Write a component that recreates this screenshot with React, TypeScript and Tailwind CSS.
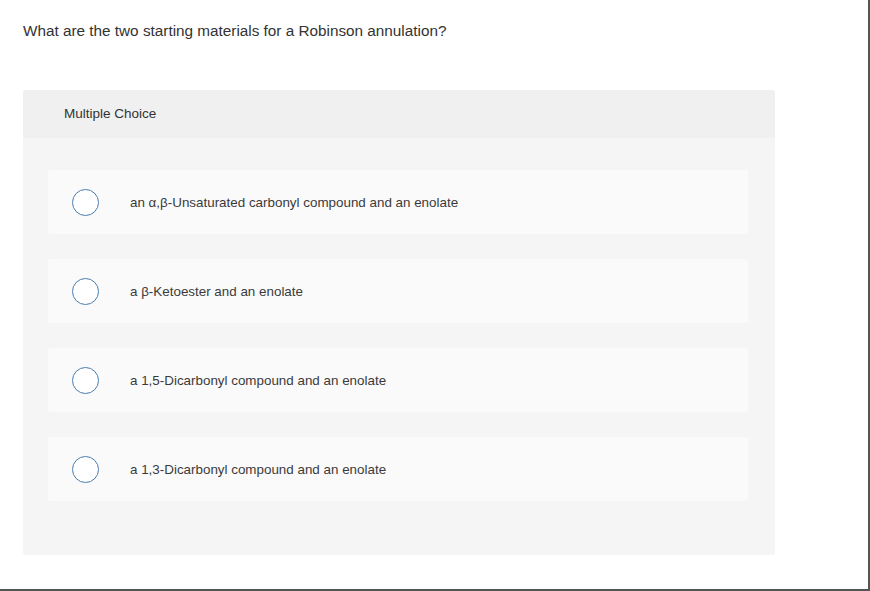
import React from "react";

const options = [
  "an α,β-Unsaturated carbonyl compound and an enolate",
  "a β-Ketoester and an enolate",
  "a 1,5-Dicarbonyl compound and an enolate",
  "a 1,3-Dicarbonyl compound and an enolate",
];

export default function App() {
  return (
    <div
      className="w-[870px] h-[591px] bg-white border-r-2 border-b-2 border-[#555] overflow-hidden"
      style={{ fontFamily: "'Liberation Sans', Arial, sans-serif" }}
    >
      <div className="pt-[21px] pl-[23px] text-[15.3px] leading-[20px] text-[#333]">
        What are the two starting materials for a Robinson annulation?
      </div>
      <div className="mt-[49px] ml-[23px] w-[752px] rounded-[3px] bg-[#f5f5f5] overflow-hidden">
        <div className="h-[48px] bg-[#f0f0f0] pl-[41px] pt-[1px] flex items-center text-[13.5px] text-[#333]">
          Multiple Choice
        </div>
        <div className="pt-[32px] pb-[54px] pl-[25px] flex flex-col gap-[25px]">
          {options.map((o) => (
            <div
              key={o}
              className="w-[700px] h-[64px] rounded-[3px] bg-[#fafafa] flex items-center pl-[24px]"
            >
              <div className="w-[27px] h-[27px] rounded-full border-[1.5px] border-[#4a7cae] bg-white shrink-0" />
              <div className="ml-[31px] text-[13.4px] leading-[16px] pt-[2px] text-[#3a3a3a]">{o}</div>
            </div>
          ))}
        </div>
      </div>
    </div>
  );
}
